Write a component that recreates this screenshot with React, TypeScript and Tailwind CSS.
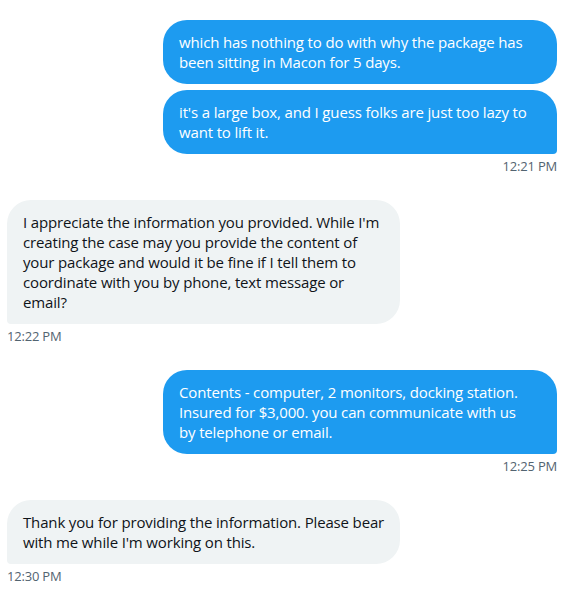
import React from 'react';

type Msg = { lines: string[] };

const font = { fontFamily: '"Open Sans", "Liberation Sans", Arial, sans-serif' };

const Sent: React.FC<{ messages: Msg[]; time: string }> = ({ messages, time }) => (
  <div className="flex flex-col items-end pb-[26px]">
    <div className="flex flex-col items-end gap-[6px]">
      {messages.map((m, i) => (
        <div
          key={i}
          className={`w-[394px] rounded-[24px] bg-[#1d9bf0] px-4 py-3 text-[15px] leading-5 tracking-[-0.15px] text-white ${
            i === messages.length - 1 ? 'rounded-br-[4px]' : ''
          }`}
        >
          {m.lines.map((l, j) => (
            <div key={j} className="whitespace-nowrap">{l}</div>
          ))}
        </div>
      ))}
    </div>
    <div className="mt-1 text-[13px] leading-4 tracking-[-0.2px] text-[#536471]">{time}</div>
  </div>
);

const Received: React.FC<{ lines: string[]; time: string }> = ({ lines, time }) => (
  <div className="flex flex-col items-start pb-[26px]">
    <div className="w-[393px] rounded-[24px] rounded-bl-[4px] bg-[#eff3f4] px-4 py-3 text-[15px] leading-5 tracking-[-0.15px] text-[#0f1419]">
      {lines.map((l, j) => (
        <div key={j} className="whitespace-nowrap">{l}</div>
      ))}
    </div>
    <div className="mt-1 text-[13px] leading-4 tracking-[-0.2px] text-[#536471]">{time}</div>
  </div>
);

export default function App() {
  return (
    <div className="min-h-screen bg-white pl-[7px] pr-[15px] pt-5" style={font}>
      <Sent
        time="12:21 PM"
        messages={[
          { lines: ['which has nothing to do with why the package has', 'been sitting in Macon for 5 days.'] },
          { lines: ["it's a large box, and I guess folks are just too lazy to", 'want to lift it.'] },
        ]}
      />
      <Received
        time="12:22 PM"
        lines={[
          "I appreciate the information you provided. While I'm",
          'creating the case may you provide the content of',
          'your package and would it be fine if I tell them to',
          'coordinate with you by phone, text message or',
          'email?',
        ]}
      />
      <Sent
        time="12:25 PM"
        messages={[
          {
            lines: [
              'Contents - computer, 2 monitors, docking station.',
              'Insured for $3,000. you can communicate with us',
              'by telephone or email.',
            ],
          },
        ]}
      />
      <Received
        time="12:30 PM"
        lines={['Thank you for providing the information. Please bear', "with me while I'm working on this."]}
      />
    </div>
  );
}
